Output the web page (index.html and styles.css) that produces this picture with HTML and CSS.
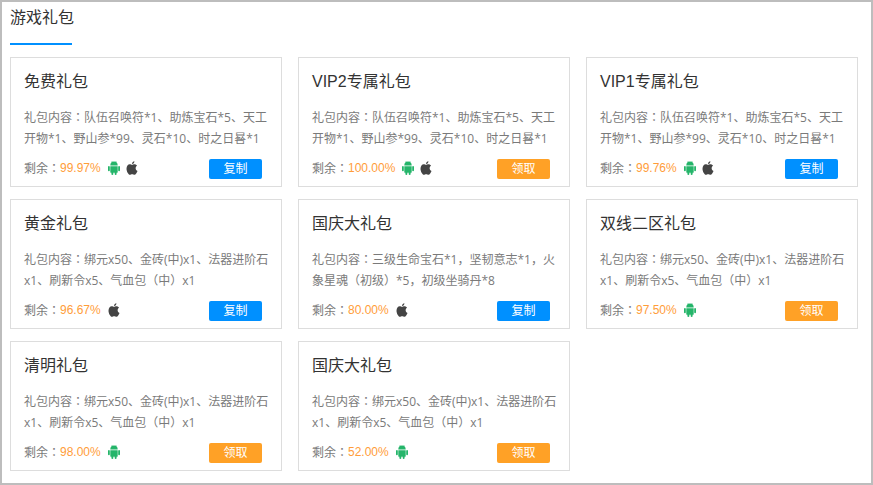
FILE: index.html
```html
<!DOCTYPE html>
<html lang="zh-CN">
<head>
<meta charset="utf-8">
<title>游戏礼包</title>
<link rel="stylesheet" href="styles.css">
</head>
<body>
<svg class="defs" width="0" height="0" aria-hidden="true">
  <symbol id="android" viewBox="0 0 12 13" preserveAspectRatio="none">
    <path d="M2.300 4.200a3.700 3.700 0 0 1 7.400 0z"/>
    <path d="M2.300 4.800h7.400v5.400a.8.8 0 0 1-.8.8H3.100a.8.8 0 0 1-.8-.8z"/>
    <rect x="0" y="4.700" width="1.800" height="4.800" rx=".9"/>
    <rect x="10.200" y="4.700" width="1.800" height="4.800" rx=".9"/>
    <rect x="3.400" y="10" width="1.900" height="3" rx=".9"/>
    <rect x="6.700" y="10" width="1.900" height="3" rx=".9"/>
    <path d="M3.800 .2 5 2M8.200 .2 7 2" stroke="currentColor" stroke-width=".6" fill="none"/>
  </symbol>
  <symbol id="apple" viewBox="0 0 12 13" preserveAspectRatio="none">
    <path d="M8.400.2c.1 1.300-1 2.600-2.400 2.600C5.900 1.500 7 .3 8.400.2z"/>
    <path d="M6 3.500c.7 0 1.400-.5 2.500-.5 1 0 1.900.5 2.500 1.300-2 1.200-1.700 4 .5 4.900-.6 1.600-1.800 3.600-3 3.600-.9 0-1.200-.5-2.300-.5s-1.500.5-2.300.5C2.500 12.800.5 9.800.5 7.200.5 4.700 2 3 3.700 3c1 0 1.700.5 2.300.5z"/>
  </symbol>
</svg>
<main class="page">
  <header class="head"><h1 class="head-title">游戏礼包</h1></header>
  <section class="grid">
    <article class="card">
      <h2 class="card-title">免费礼包</h2>
      <p class="card-desc" lang="ja">礼包内容：队伍召唤符*1、助炼宝石*5、天工开物*1、野山参*99、灵石*10、时之日晷*1</p>
      <div class="card-foot"><span lang="ja">剩余：</span><span class="pct">99.97%</span>
        <svg class="ico android"><use href="#android"/></svg><svg class="ico apple"><use href="#apple"/></svg>
        <a class="btn blue">复制</a></div>
    </article>
    <article class="card">
      <h2 class="card-title">VIP2专属礼包</h2>
      <p class="card-desc" lang="ja">礼包内容：队伍召唤符*1、助炼宝石*5、天工开物*1、野山参*99、灵石*10、时之日晷*1</p>
      <div class="card-foot"><span lang="ja">剩余：</span><span class="pct">100.00%</span>
        <svg class="ico android"><use href="#android"/></svg><svg class="ico apple"><use href="#apple"/></svg>
        <a class="btn orange">领取</a></div>
    </article>
    <article class="card">
      <h2 class="card-title">VIP1专属礼包</h2>
      <p class="card-desc" lang="ja">礼包内容：队伍召唤符*1、助炼宝石*5、天工开物*1、野山参*99、灵石*10、时之日晷*1</p>
      <div class="card-foot"><span lang="ja">剩余：</span><span class="pct">99.76%</span>
        <svg class="ico android"><use href="#android"/></svg><svg class="ico apple"><use href="#apple"/></svg>
        <a class="btn blue">复制</a></div>
    </article>
    <article class="card">
      <h2 class="card-title">黄金礼包</h2>
      <p class="card-desc" lang="ja">礼包内容：绑元x50、金砖(中)x1、法器进阶石x1、刷新令x5、气血包（中）x1</p>
      <div class="card-foot"><span lang="ja">剩余：</span><span class="pct">96.67%</span>
        <svg class="ico apple"><use href="#apple"/></svg>
        <a class="btn blue">复制</a></div>
    </article>
    <article class="card">
      <h2 class="card-title">国庆大礼包</h2>
      <p class="card-desc" lang="ja">礼包内容：三级生命宝石*1，坚韧意志*1，火象星魂（初级）*5，初级坐骑丹*8</p>
      <div class="card-foot"><span lang="ja">剩余：</span><span class="pct">80.00%</span>
        <svg class="ico apple"><use href="#apple"/></svg>
        <a class="btn blue">复制</a></div>
    </article>
    <article class="card">
      <h2 class="card-title">双线二区礼包</h2>
      <p class="card-desc" lang="ja">礼包内容：绑元x50、金砖(中)x1、法器进阶石x1、刷新令x5、气血包（中）x1</p>
      <div class="card-foot"><span lang="ja">剩余：</span><span class="pct">97.50%</span>
        <svg class="ico android"><use href="#android"/></svg>
        <a class="btn orange">领取</a></div>
    </article>
    <article class="card">
      <h2 class="card-title">清明礼包</h2>
      <p class="card-desc" lang="ja">礼包内容：绑元x50、金砖(中)x1、法器进阶石x1、刷新令x5、气血包（中）x1</p>
      <div class="card-foot"><span lang="ja">剩余：</span><span class="pct">98.00%</span>
        <svg class="ico android"><use href="#android"/></svg>
        <a class="btn orange">领取</a></div>
    </article>
    <article class="card">
      <h2 class="card-title">国庆大礼包</h2>
      <p class="card-desc" lang="ja">礼包内容：绑元x50、金砖(中)x1、法器进阶石x1、刷新令x5、气血包（中）x1</p>
      <div class="card-foot"><span lang="ja">剩余：</span><span class="pct">52.00%</span>
        <svg class="ico android"><use href="#android"/></svg>
        <a class="btn orange">领取</a></div>
    </article>
  </section>
</main>
</body>
</html>
```

FILE: styles.css
```css
* { box-sizing: border-box; }
html, body { margin: 0; padding: 0; background: #fff; }
body { font-family: "Liberation Sans", "Noto Sans CJK SC", sans-serif; width: 873px; height: 485px; overflow: hidden; }
.defs { display: block; height: 0; }
.page { width: 873px; height: 485px; border: 2px solid #bdbdbd; padding: 0 8px; overflow: hidden; }
.head { height: 43px; margin-bottom: 12px; }
.head-title { display: inline-block; height: 43px; margin: 0; padding-top: 4px; width: 62px; border-bottom: 2px solid #0090ff; font-size: 16px; line-height: 24px; font-weight: 400; color: #333; white-space: nowrap; }
.grid { display: grid; grid-template-columns: repeat(3, 272px); grid-auto-rows: 130px; column-gap: 16px; row-gap: 12px; }
.card { border: 1px solid #ddd; padding: 0 19px 0 13px; display: flex; flex-direction: column; }
.card-title { margin: 13px 0 0; font-size: 16px; line-height: 22px; font-weight: 400; color: #333; white-space: nowrap; }
.card-desc { margin: 14px -8px 0 0; font-family: "Open Sans", "Noto Sans CJK JP", sans-serif; font-size: 12px; line-height: 21px; height: 42px; color: #7a7a7a; }
.card-foot { margin-top: 10px; display: flex; align-items: flex-start; height: 20px; font-size: 12px; line-height: 18px; color: #7a7a7a; }
.card-foot [lang] { font-family: "Noto Sans CJK JP", sans-serif; }
.pct { color: #ff9d3a; margin-right: 7px; }
.ico { width: 12px; height: 14px; margin: 2px 6px 0 0; flex: none; }
.android { color: #25b56a; fill: #25b56a; }
.apple { color: #444; fill: #444; }
.btn { margin-left: auto; width: 53px; height: 20px; border-radius: 2px; color: #fff; text-align: center; font-size: 12px; line-height: 20px; }
.blue { background: #0090ff; }
.orange { background: #ffa126; }
```
